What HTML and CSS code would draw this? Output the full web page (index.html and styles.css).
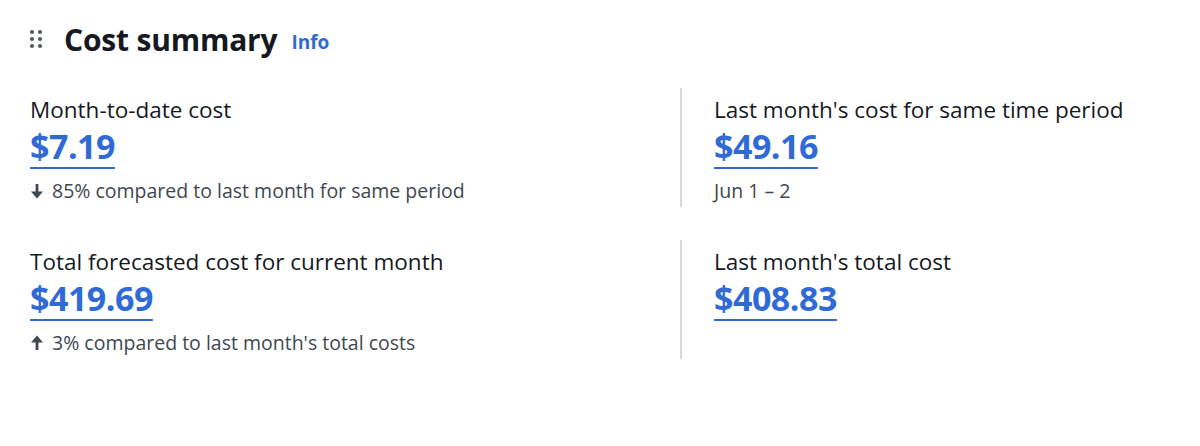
FILE: index.html
```html
<!DOCTYPE html>
<html lang="en">
<head>
  <meta charset="UTF-8">
  <title>Cost summary</title>
  <link rel="stylesheet" href="styles.css">
</head>
<body>

  <!-- Cost summary widget -->
  <div class="widget">
    <div class="header">
      <svg class="drag" width="14" height="20" viewBox="0 0 14 20">
        <circle cx="3" cy="3" r="2.1"/><circle cx="11" cy="3" r="2.1"/>
        <circle cx="3" cy="10" r="2.1"/><circle cx="11" cy="10" r="2.1"/>
        <circle cx="3" cy="17" r="2.1"/><circle cx="11" cy="17" r="2.1"/>
      </svg>
      <h2>Cost summary</h2>
      <a class="info">Info</a>
    </div>

    <div class="grid">
      <div class="cell">
        <div class="label">Month-to-date cost</div>
        <a class="value">$7.19</a>
        <div class="sub">
          <svg class="arrow" width="14" height="16" viewBox="0 0 14 16"><path class="shaft" d="M7 1v10"/><path d="M1 8.5h12L7 15.5z"/></svg>
          85% compared to last month for same period
        </div>
      </div>
      <div class="cell side">
        <div class="label">Last month's cost for same time period</div>
        <a class="value">$49.16</a>
        <div class="sub">Jun 1 – 2</div>
      </div>
      <div class="cell">
        <div class="label">Total forecasted cost for current month</div>
        <a class="value">$419.69</a>
        <div class="sub">
          <svg class="arrow" width="14" height="16" viewBox="0 0 14 16"><path class="shaft" d="M7 15V5"/><path d="M1 7.5h12L7 0.5z"/></svg>
          3% compared to last month's total costs
        </div>
      </div>
      <div class="cell side">
        <div class="label">Last month's total cost</div>
        <a class="value">$408.83</a>
      </div>
    </div>
  </div>

</body>
</html>
```

FILE: styles.css
```css
body {
  font-family: "Open Sans", Arial, sans-serif;
  background: #ffffff;
  color: #16191f;
  margin: 0;
}
.widget {
  padding: 22px 30px 0 29px;
}
.header {
  display: flex;
  align-items: center;
  height: 34px;
}
.drag {
  fill: #545b64;
  margin-right: 21px;
}
h2 {
  margin: 0;
  font-size: 30px;
  font-weight: 700;
  letter-spacing: -0.2px;
}
.info {
  color: #2f6ad6;
  font-weight: 700;
  font-size: 19px;
  margin-left: 14px;
  margin-top: 6px;
}
.grid {
  display: grid;
  grid-template-columns: 651px 1fr;
  row-gap: 33px;
  margin-top: 32px;
}
.cell {
  height: 119px;
  padding-top: 9px;
  padding-left: 1px;
  box-sizing: border-box;
}
.cell.side {
  border-left: 2px solid #d5d8dc;
  padding-left: 32px;
}
.label {
  font-size: 22.5px;
  line-height: 26px;
}
.value {
  display: inline-block;
  color: #2f6ad6;
  font-size: 34px;
  font-weight: 700;
  line-height: 46px;
  text-decoration: underline;
  text-decoration-thickness: 2px;
  text-underline-offset: 8px;
  letter-spacing: -0.5px;
}
.sub {
  display: flex;
  align-items: center;
  gap: 8px;
  font-size: 19.5px;
  line-height: 24px;
  color: #414750;
  margin-top: 10px;
}
.arrow {
  fill: #414750;
}
.arrow .shaft {
  fill: none;
  stroke: #414750;
  stroke-width: 2.8;
}
```
